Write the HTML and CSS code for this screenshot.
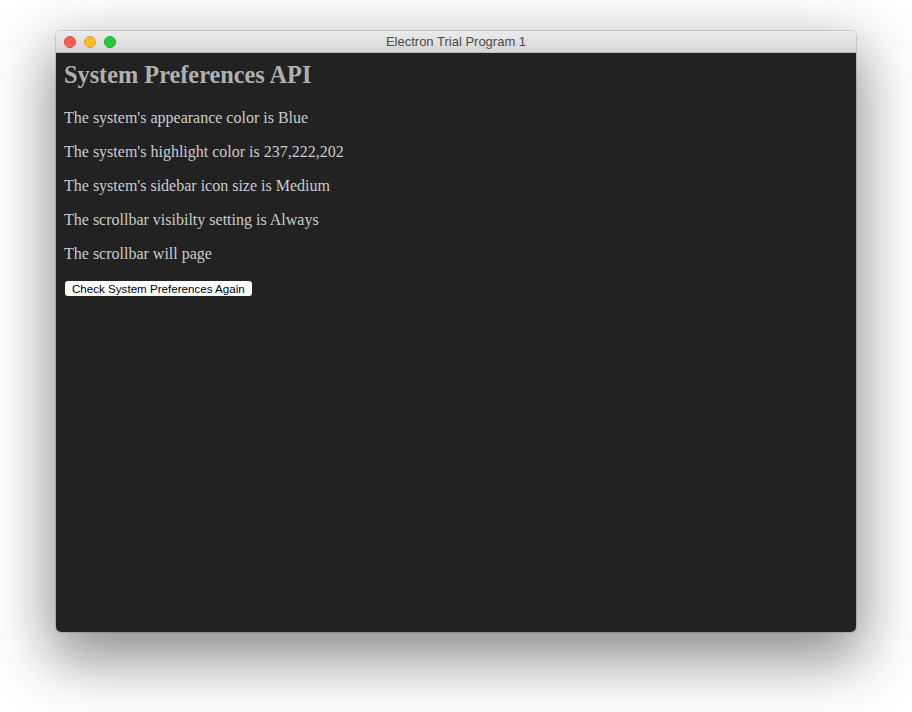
FILE: index.html
```html
<!DOCTYPE html>
<html lang="en">
<head>
    <meta charset="UTF-8">
    <meta name="viewport" content="width=device-width, initial-scale=1.0">
    <title>Electron Trial Program 1</title>
    <link rel="stylesheet" href="styles.css">
</head>
<body>
    <div class="window">
        <!-- title bar -->
        <div class="titlebar">
            <div class="lights">
                <span class="light close"></span>
                <span class="light minimize"></span>
                <span class="light zoom"></span>
            </div>
            <div class="title">Electron Trial Program 1</div>
        </div>

        <!-- app content -->
        <div class="content">
            <h1>System Preferences API</h1>
            <p>The system's appearance color is Blue</p>
            <p>The system's highlight color is 237,222,202</p>
            <p>The system's sidebar icon size is Medium</p>
            <p>The scrollbar visibilty setting is Always</p>
            <p>The scrollbar will page</p>
            <button class="check-btn">Check System Preferences Again</button>
        </div>
    </div>
</body>
</html>
```

FILE: styles.css
```css
body {
    margin: 0;
    padding: 31px 0 80px 56px;
    background-color: #ffffff;
}
.window {
    width: 800px;
    border-radius: 5px;
    overflow: hidden;
    box-shadow: 0 22px 60px 6px rgba(0, 0, 0, 0.45), 0 0 0 1px rgba(0, 0, 0, 0.12);
}
.titlebar {
    position: relative;
    height: 22px;
    box-sizing: border-box;
    background: linear-gradient(#ebebeb, #d6d6d6);
    border-bottom: 1px solid #b9b9b9;
    display: flex;
    align-items: center;
    justify-content: center;
}
.lights {
    position: absolute;
    left: 8px;
    top: 5px;
    display: flex;
    gap: 8px;
}
.light {
    width: 12px;
    height: 12px;
    border-radius: 50%;
    box-sizing: border-box;
}
.close {
    background-color: #fc5f57;
    border: 0.5px solid #de4a41;
}
.minimize {
    background-color: #fdbc2e;
    border: 0.5px solid #dea123;
}
.zoom {
    background-color: #28c840;
    border: 0.5px solid #1aab29;
}
.title {
    font-family: "Liberation Sans", Arial, sans-serif;
    font-size: 13px;
    color: #4a4a4a;
}
.content {
    height: 579px;
    box-sizing: border-box;
    background-color: #222222;
    padding: 8px 8px;
    font-family: "Liberation Serif", "Times New Roman", serif;
    color: #cccccc;
}
.content h1 {
    font-size: 24.3px;
    font-weight: bold;
    color: #b0b0b0;
    margin: 0 0 20px;
}
.content p {
    font-size: 16px;
    margin: 0 0 16px;
}
.check-btn {
    margin: -1px 0 0 1px;
    padding: 1px 7px;
    font-family: "Liberation Sans", Arial, sans-serif;
    font-size: 11.6px;
    color: #000000;
    background-color: #ffffff;
    border: none;
    border-radius: 3px;
}
```
